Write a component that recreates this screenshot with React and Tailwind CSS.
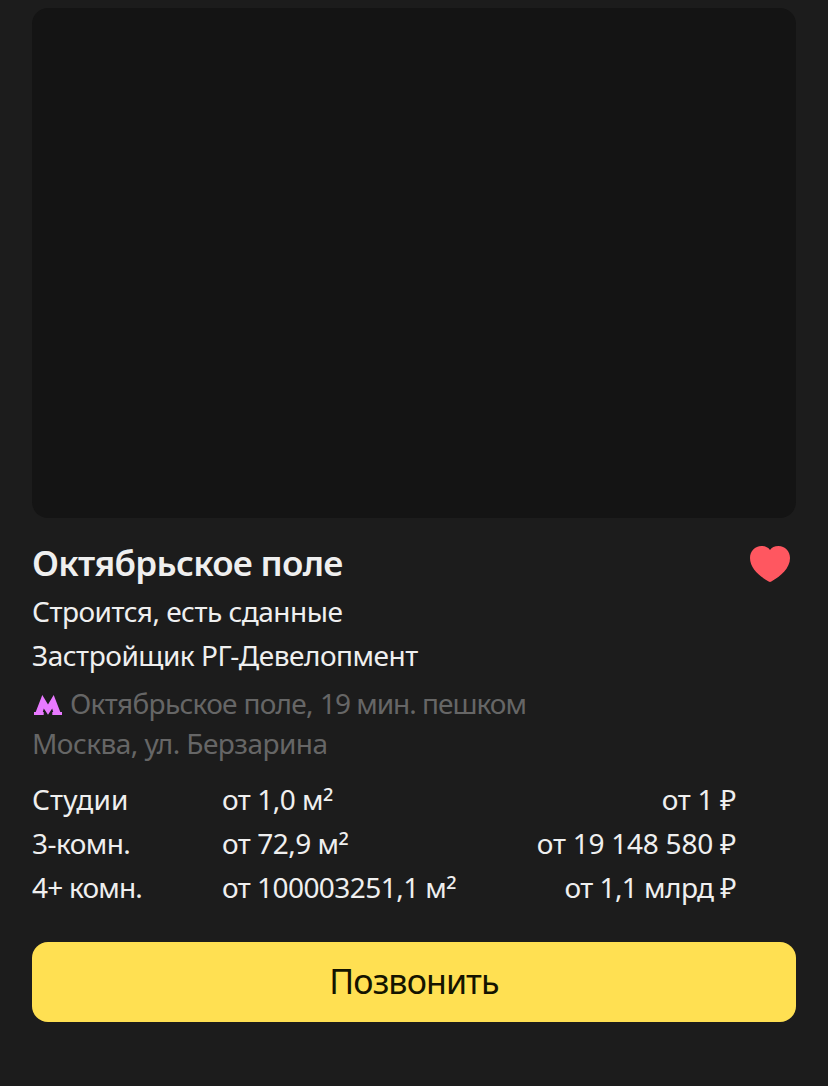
const offers = [
  { rooms: 'Студии', area: 'от 1,0 м', price: 'от 1 ₽', roomsClass: 'tracking-[0.15px]', areaClass: 'tracking-[-0.5px]', priceClass: 'tracking-[-0.35px]' },
  { rooms: '3-комн.', area: 'от 72,9 м', price: 'от 19 148 580 ₽', roomsClass: 'tracking-[-0.55px]', areaClass: 'tracking-[-0.5px]', priceClass: 'tracking-[-0.25px]' },
  { rooms: '4+ комн.', area: 'от 100003251,1 м', price: 'от 1,1 млрд ₽', roomsClass: 'tracking-[-0.8px]', areaClass: 'tracking-[-0.55px]', priceClass: 'tracking-[-0.55px]' },
];

function Heart() {
  return (
    <svg viewBox="0 0 40 36" className="mr-1.5 h-9 w-10" fill="#ff5760">
      <path d="M21.300 35.500Q20 36.400 18.700 35.500C9 30 0 22 0 12C0 5 5 0 11.500 0C15.500 0 18.300 1.500 20 4C21.700 1.500 24.500 0 28.500 0C35 0 40 5 40 12C40 22 31 30 21.300 35.500Z" />
    </svg>
  );
}

function Metro() {
  return (
    <svg viewBox="0 0 28 20" className="mt-[3px] mr-2 ml-0.5 h-5 w-7 shrink-0" fill="#e879ff">
      <path d="M8.300 0L14 9.500L19.700 0L26.300 17H28V20H18.300V17H19.200L18.200 13.500L14 19.800L9.800 13.500L8.800 17H9.700V20H0V17H1.700Z" />
    </svg>
  );
}

export default function App() {
  return (
    <main className="flex h-[1086px] w-[828px] flex-col bg-[#1c1c1c] px-8 pt-2 font-['Noto_Sans','Open_Sans',sans-serif] text-[28px] leading-[44px] whitespace-nowrap text-[#efefef]">
      <div className="h-[510px] shrink-0 rounded-2xl bg-[#141414]" />
      <div className="mt-6 flex h-11 items-center justify-between">
        <h1 className="pb-[3px] text-[35px] font-semibold tracking-[-0.7px]">Октябрьское поле</h1>
        <Heart />
      </div>
      <p className="mt-[3px] tracking-[-0.5px]">Строится, есть сданные</p>
      <p className="tracking-[-0.47px]">Застройщик РГ-Девелопмент</p>
      <div className="mt-1.5 leading-10 text-[#666666]">
        <p className="flex items-center"><Metro /><span className="tracking-[-0.7px]">Октябрьское поле, </span><span className="ml-[7px] tracking-[-1px]">19 мин. пешком</span></p>
        <p className="tracking-[-0.55px]">Москва, ул. Берзарина</p>
      </div>
      <div className="mt-3.5 w-[704px]">
        {offers.map((o) => (
          <div key={o.rooms} className="flex">
            <span className={'w-[190px] ' + o.roomsClass}>{o.rooms}</span>
            <span className={o.areaClass}>{o.area}<span className="relative top-[3px] text-[30px] leading-none">²</span></span>
            <span className={'ml-auto ' + o.priceClass}>{o.price}</span>
          </div>
        ))}
      </div>
      <button className="mt-[33px] h-20 shrink-0 rounded-2xl bg-[#ffe052] pb-0.5 text-[34px] tracking-[-0.9px] text-[#141400]">Позвонить</button>
    </main>
  );
}
